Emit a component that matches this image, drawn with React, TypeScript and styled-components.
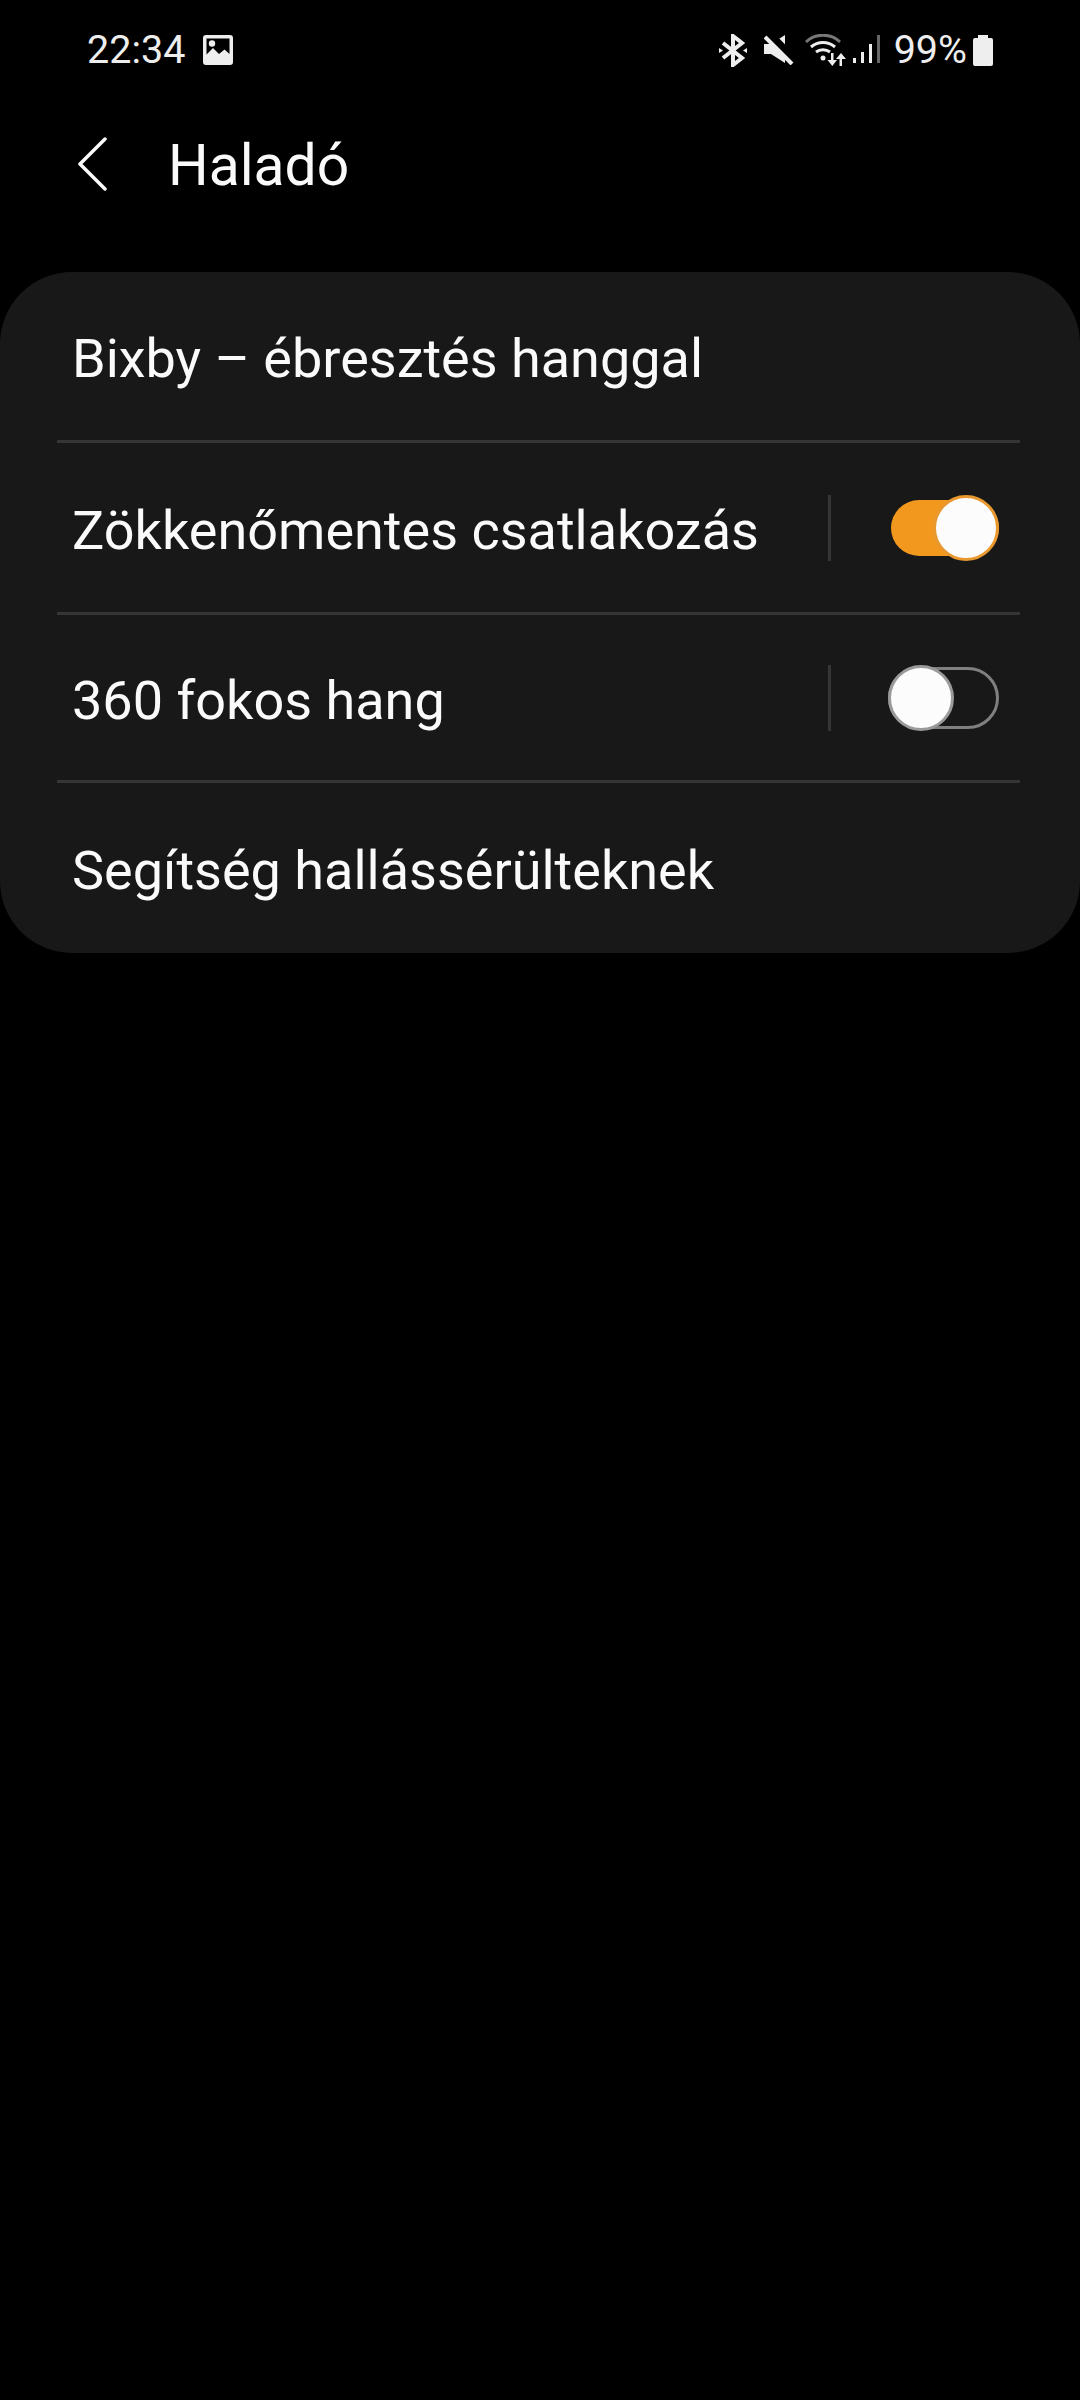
import styled, { createGlobalStyle } from 'styled-components'

const GlobalStyle = createGlobalStyle`
  html, body {
    margin: 0;
    padding: 0;
    background: #000;
  }
`

const Screen = styled.div`
  width: 1080px;
  height: 2400px;
  background: #000;
  color: #fafafa;
  font-family: Roboto, 'Liberation Sans', sans-serif;
  overflow: hidden;
`

const StatusBar = styled.div`
  height: 100px;
  padding: 0 87px;
  display: flex;
  align-items: center;
  justify-content: space-between;
  color: #eee;
  box-sizing: border-box;
`

const StatusGroup = styled.div`
  display: flex;
  align-items: center;
`

const StatusText = styled.span<{ $left?: number }>`
  font-size: 39.5px;
  line-height: 46px;
  margin-left: ${({ $left = 0 }) => $left}px;
`

const StatusIcon = styled.svg<{ $left?: number }>`
  display: block;
  margin-left: ${({ $left = 0 }) => $left}px;
  flex-shrink: 0;
`

const Toolbar = styled.div`
  height: 132px;
  display: flex;
  align-items: center;
  padding-left: 76px;
`

const BackIcon = styled.svg`
  display: block;
  width: 32px;
  height: 58px;
`

const Title = styled.h1`
  margin: 0 0 0 60px;
  font-size: 57px;
  line-height: 64px;
  font-weight: 400;
`

const Card = styled.div`
  margin-top: 40px;
  background: #181818;
  border-radius: 72px;
  padding: 0 60px 0 57px;
`

const Row = styled.div<{ $height: number }>`
  box-sizing: border-box;
  height: ${({ $height }) => $height}px;
  display: flex;
  align-items: center;
  padding: 0 21px 0 15px;
  border-bottom: 3px solid #353535;

  &:last-child {
    border-bottom: none;
  }
`

const Label = styled.span`
  flex: 1;
  font-size: 54px;
  line-height: 64px;
  padding-top: 6px;
`

const VerticalRule = styled.div`
  width: 3px;
  height: 66px;
  background: #353535;
`

const Switch = styled.div<{ $on: boolean }>`
  position: relative;
  box-sizing: border-box;
  width: ${({ $on }) => ($on ? 108 : 111)}px;
  height: ${({ $on }) => ($on ? 56 : 62)}px;
  margin-left: ${({ $on }) => ($on ? 60 : 57)}px;
  border-radius: 31px;
  background: ${({ $on }) => ($on ? '#f2981f' : 'transparent')};
  border: ${({ $on }) => ($on ? 'none' : '3px solid #808080')};
`

const Knob = styled.div<{ $on: boolean }>`
  position: absolute;
  box-sizing: border-box;
  top: 50%;
  width: 66px;
  height: 66px;
  margin-top: -33px;
  border-radius: 50%;
  background: #fcfcfc;
  border: 3px solid ${({ $on }) => ($on ? '#e8982f' : '#9a9a9a')};
  ${({ $on }) => ($on ? 'right: 0;' : 'left: -3px;')}
`

const PictureGlyph = () => (
  <StatusIcon $left={18} width="30" height="30" viewBox="0 0 30 30">
    <path
      fill="#eee"
      fillRule="evenodd"
      d="M3 0h24a3 3 0 0 1 3 3v24a3 3 0 0 1-3 3H3a3 3 0 0 1-3-3V3a3 3 0 0 1 3-3zM3.500 3.500v16l6.500-6.500 6 6 5.500-4.500 5 4.500V3.500z"
    />
    <circle cx="9" cy="8.500" r="3.200" fill="#eee" />
  </StatusIcon>
)

const BluetoothGlyph = () => (
  <StatusIcon width="28" height="33" viewBox="0 0 28 33">
    <path
      fill="none"
      stroke="#eee"
      strokeWidth="4"
      d="M4 9l19 15-9 7V2l9 7L4 24"
    />
    <path fill="#eee" d="M0 14l4 2.500-4 2.500zM28 14l-4 2.500 4 2.500z" />
  </StatusIcon>
)

const MuteGlyph = () => (
  <StatusIcon $left={17} width="30" height="30" viewBox="0 0 30 30">
    <path fill="#eee" d="M0 9h7L21 0v28L7 19H0z" />
    <path stroke="#000" strokeWidth="8" d="M5 -1l27 27" />
    <path stroke="#eee" strokeWidth="4" d="M1 2l27 27" />
  </StatusIcon>
)

const WifiGlyph = () => (
  <StatusIcon $left={11} width="42" height="32" viewBox="0 0 42 32">
    <path fill="none" stroke="#777" strokeWidth="3" d="M1 8c9-9 25-9 34 0" />
    <path fill="none" stroke="#eee" strokeWidth="3" d="M6 13c7-6 17-6 24 0" />
    <path fill="none" stroke="#eee" strokeWidth="3" d="M11 18c4-3 10-3 14 0" />
    <circle cx="18" cy="24" r="2.500" fill="#eee" />
    <path fill="#eee" d="M26 19h2.500v7H32l-4.700 6-4.800-6h3.500z" />
    <path fill="#eee" d="M37 32h-2.500v-7H31l5-6 5 6h-4z" />
  </StatusIcon>
)

const SignalGlyph = () => (
  <StatusIcon $left={6} width="27" height="30" viewBox="0 0 27 30">
    <rect x="0" y="23" width="3" height="5" fill="#eee" />
    <rect x="8" y="17" width="3" height="11" fill="#eee" />
    <rect x="16" y="9" width="3" height="19" fill="#eee" />
    <rect x="24" y="0" width="3" height="28" fill="#666" />
  </StatusIcon>
)

const BatteryGlyph = () => (
  <StatusIcon $left={6} width="20" height="31" viewBox="0 0 20 31">
    <path
      fill="#eee"
      d="M5 0h10v3h3a2 2 0 0 1 2 2v24a2 2 0 0 1-2 2H2a2 2 0 0 1-2-2V5a2 2 0 0 1 2-2h3z"
    />
  </StatusIcon>
)

type SettingRowProps = {
  label: string
  height: number
  on?: boolean
}

const SettingRow = ({ label, height, on }: SettingRowProps) => (
  <Row $height={height}>
    <Label>{label}</Label>
    {on !== undefined && (
      <>
        <VerticalRule />
        <Switch $on={on}>
          <Knob $on={on} />
        </Switch>
      </>
    )}
  </Row>
)

export default function App() {
  return (
    <Screen>
      <GlobalStyle />
      <StatusBar>
        <StatusGroup>
          <StatusText>22:34</StatusText>
          <PictureGlyph />
        </StatusGroup>
        <StatusGroup>
          <BluetoothGlyph />
          <MuteGlyph />
          <WifiGlyph />
          <SignalGlyph />
          <StatusText $left={14}>99%</StatusText>
          <BatteryGlyph />
        </StatusGroup>
      </StatusBar>
      <Toolbar>
        <BackIcon viewBox="0 0 32 58">
          <path
            d="M29 2L4 27l25 25"
            fill="none"
            stroke="#fafafa"
            strokeWidth="3.500"
            strokeLinecap="round"
            strokeLinejoin="round"
          />
        </BackIcon>
        <Title>Haladó</Title>
      </Toolbar>
      <Card>
        <SettingRow label="Bixby – ébresztés hanggal" height={171} />
        <SettingRow label="Zökkenőmentes csatlakozás" height={172} on />
        <SettingRow label="360 fokos hang" height={168} on={false} />
        <SettingRow label="Segítség hallássérülteknek" height={170} />
      </Card>
    </Screen>
  )
}
